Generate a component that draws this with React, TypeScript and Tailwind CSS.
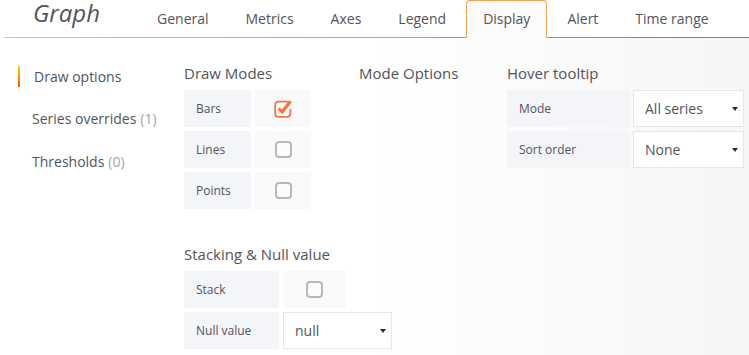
import type { ReactNode } from 'react'

const tabs = ['General', 'Metrics', 'Axes', 'Legend', 'Display', 'Alert', 'Time range']

function Caret() {
	return <span className="w-0 h-0 border-x-[3.5px] border-t-[4px] border-x-transparent border-t-[#2b2b2b]" />
}

function CheckBox({ checked }: { checked?: boolean }) {
	if (checked) {
		return (
			<svg width="20" height="19" viewBox="0 0 20 19" className="ml-[1px] mb-[1px]">
				<path
					d="M14.5 2.6 H4.2 a3 3 0 0 0 -3 3 V14.8 a3 3 0 0 0 3 3 H13.4 a3 3 0 0 0 3 -3 V10"
					fill="none"
					stroke="#f5773f"
					strokeWidth="1.8"
				/>
				<path d="M4.6 9.4 L8.2 12.8 L16.6 2.2" fill="none" stroke="#f5773f" strokeWidth="3.2" />
			</svg>
		)
	}
	return <span className="w-[17px] h-[17px] rounded-[4px] border-2 border-[#b8b8b8] bg-[#fcfcfc]" />
}

function Label({ w, children }: { w: string; children: ReactNode }) {
	return <div className={`${w} h-full flex items-center pl-3 bg-[#f4f5f8] text-[12px] leading-4`}>{children}</div>
}

function CheckRow({ label, lw, cw, checked }: { label: string; lw: string; cw: string; checked?: boolean }) {
	return (
		<div className="flex gap-1 h-[37px]">
			<Label w={lw}>{label}</Label>
			<div className={`${cw} h-full flex items-center justify-center bg-[#f9f9fa]`}>
				<CheckBox checked={checked} />
			</div>
		</div>
	)
}

function SelectRow({ label, lw, sw, value }: { label: string; lw: string; sw: string; value: string }) {
	return (
		<div className="flex gap-[3px] h-[37px]">
			<Label w={lw}>{label}</Label>
			<div className={`${sw} h-full flex items-center justify-between pl-[11px] pr-[5px] bg-white border border-[#e6e6e8] text-[14px] leading-5`}>
				<span>{value}</span>
				<Caret />
			</div>
		</div>
	)
}

function Heading({ children }: { children: ReactNode }) {
	return <h3 className="text-[15px] leading-5 mb-[7px] pt-px">{children}</h3>
}

export default function App() {
	return (
		<div className="w-[749px] h-[355px] overflow-hidden bg-white font-['Open_Sans',sans-serif] text-[#52545c]">
			{/* tab bar */}
			<div className="flex items-start h-[37px]">
				<div className="w-[140px] pl-[33px] pr-2 text-[24px] leading-[26px] italic">Graph</div>
				{tabs.map(t => (
					<div
						key={t}
						className={
							t === 'Display'
								? 'relative z-10 h-[38px] mr-[3px] px-4 pt-2 text-[14px] leading-5 border-x border-t border-[#eda455] rounded-t-[4px] bg-[#fbfbfb]'
								: 'h-[38px] mr-[3px] px-4 pt-2 text-[14px] leading-5 border-x border-t border-transparent'
						}
					>
						{t}
					</div>
				))}
			</div>
			<div className="ml-1 h-px bg-linear-to-r from-[#ffd000] via-[#f7941d] to-[#ff4f00]" />

			{/* editor body */}
			<div className="flex items-start h-[317px] bg-linear-to-r from-white via-white to-[#f6f6f7]">
				<nav className="w-[184px] pl-[18px] pt-[28px] flex flex-col gap-[21.5px] text-[14px] leading-5">
					<div className="flex items-center h-[21px]">
						<span className="w-[2px] h-[21px] bg-linear-to-b from-[#ffd000] to-[#ff4f00]" />
						<span className="ml-[14px]">Draw options</span>
					</div>
					<div className="flex items-center h-[21px] pl-[14px]">
						Series overrides <span className="ml-1 text-[#a3a4a9]">(1)</span>
					</div>
					<div className="flex items-center h-[21px] pl-[14px]">
						Thresholds <span className="ml-1 text-[#a3a4a9]">(0)</span>
					</div>
				</nav>

				<div className="flex-1 pt-[24px]">
					<div className="flex">
						<section className="w-[175px]">
							<Heading>Draw Modes</Heading>
							<div className="flex flex-col gap-1">
								<CheckRow label="Bars" lw="w-[67px]" cw="w-[56px]" checked />
								<CheckRow label="Lines" lw="w-[67px]" cw="w-[56px]" />
								<CheckRow label="Points" lw="w-[67px]" cw="w-[56px]" />
							</div>
						</section>
						<section className="w-[148px]">
							<Heading>Mode Options</Heading>
						</section>
						<section>
							<Heading>Hover tooltip</Heading>
							<div className="flex flex-col gap-1">
								<SelectRow label="Mode" lw="w-[123px]" sw="w-[111px]" value="All series" />
								<SelectRow label="Sort order" lw="w-[123px]" sw="w-[111px]" value="None" />
							</div>
						</section>
					</div>

					<section className="mt-[34px]">
						<Heading>Stacking &amp; Null value</Heading>
						<div className="flex flex-col gap-1">
							<CheckRow label="Stack" lw="w-[95px]" cw="w-[63px]" />
							<div className="flex gap-1 h-[37px]">
								<Label w="w-[95px]">Null value</Label>
								<div className="w-[109px] h-full flex items-center justify-between pl-[11px] pr-[5px] bg-white border border-[#e6e6e8] text-[14px] leading-5">
									<span>null</span>
									<Caret />
								</div>
							</div>
						</div>
					</section>
				</div>
			</div>
		</div>
	)
}
